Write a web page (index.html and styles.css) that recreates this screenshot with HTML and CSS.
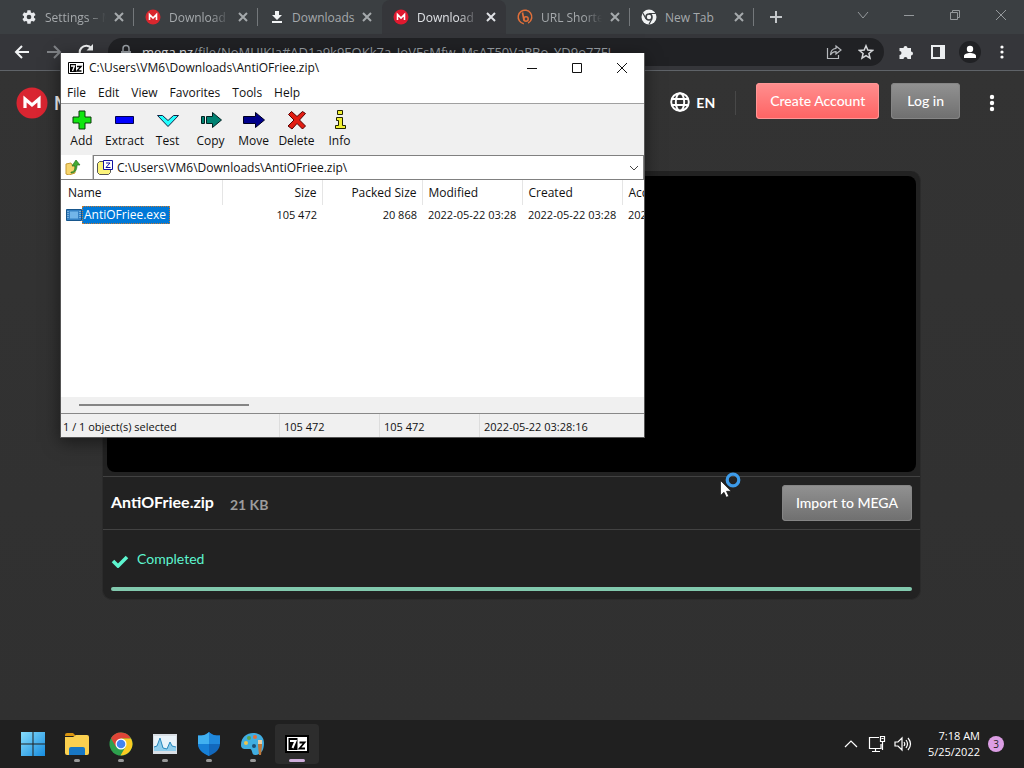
FILE: index.html
```html
<!DOCTYPE html>
<html lang="en">
<head>
<meta charset="utf-8">
<title>Download</title>
<link rel="stylesheet" href="styles.css">
</head>
<body>
<div class="desktop">
  <header class="browser">
    <div class="tabstrip">
      <div class="tab">
        <svg class="icon16" viewBox="0 0 24 24" fill="#e8eaed"><path d="M19.4 13c0-.3.1-.6.1-1s0-.7-.1-1l2.1-1.600c.2-.2.3-.4.1-.700l-2-3.400c-.1-.2-.4-.3-.6-.2l-2.500 1c-.5-.4-1.100-.7-1.700-1L14.400 2.400A.5.500 0 0 0 14 2h-4a.5.500 0 0 0-.5.400L9.200 5.100c-.6.3-1.200.6-1.700 1L5 5.100c-.2-.1-.5 0-.6.200l-2 3.400c-.1.3-.1.500.1.700L4.600 11c0 .3-.1.600-.1 1s0 .7.1 1l-2.100 1.600c-.2.2-.3.4-.1.700l2 3.400c.1.2.4.3.6.2l2.500-1c.5.4 1.100.7 1.700 1l.3 2.700c0 .2.2.4.5.4h4c.2 0 .4-.2.5-.4l.3-2.700c.6-.3 1.200-.6 1.700-1l2.500 1c.2.1.5 0 .6-.2l2-3.400c.1-.3.1-.5-.1-.7zM12 15.500a3.500 3.500 0 1 1 0-7 3.500 3.500 0 0 1 0 7z"/></svg>
        <span class="tab-title">Settings – Ma</span>
        <button class="close" aria-label="Close Settings"><svg viewBox="0 0 10 10"><path d="M1 1l8 8M9 1l-8 8"/></svg></button>
      </div>
      <div class="tab">
        <svg class="icon16" viewBox="0 0 16 16"><circle cx="8" cy="8" r="7.500" fill="#d9272e"/><path d="M4.500 11V5.500L8 9l3.500-3.500V11" fill="none" stroke="#fff" stroke-width="1.600"/></svg>
        <span class="tab-title">Download</span>
        <button class="close" aria-label="Close Download"><svg viewBox="0 0 10 10"><path d="M1 1l8 8M9 1l-8 8"/></svg></button>
      </div>
      <div class="tab no-line">
        <svg class="icon16" viewBox="0 0 16 16" fill="#f1f3f4"><path d="M6 2h4v4h3l-5 5-5-5h3zM3 12h10v2H3z"/></svg>
        <span class="tab-title">Downloads</span>
        <button class="close" aria-label="Close Downloads"><svg viewBox="0 0 10 10"><path d="M1 1l8 8M9 1l-8 8"/></svg></button>
      </div>
      <div class="tab no-line active">
        <svg class="icon16" viewBox="0 0 16 16"><circle cx="8" cy="8" r="7.500" fill="#e0192f"/><path d="M4.500 11V5.500L8 9l3.500-3.500V11" fill="none" stroke="#fff" stroke-width="1.600"/></svg>
        <span class="tab-title">Download</span>
        <button class="close" aria-label="Close current tab"><svg viewBox="0 0 10 10"><path d="M1 1l8 8M9 1l-8 8"/></svg></button>
      </div>
      <div class="tab">
        <svg class="icon16" viewBox="0 0 16 16" fill="none" stroke="#e2703a"><circle cx="8" cy="8" r="6.800" stroke-width="1.500" stroke-dasharray="38 5" transform="rotate(100 8 8)"/><path d="M5.500 3.500l1.500 8" stroke-width="1.600"/><circle cx="9" cy="10" r="2.200" stroke-width="1.500"/></svg>
        <span class="tab-title">URL Shortener</span>
        <button class="close" aria-label="Close URL Shortener"><svg viewBox="0 0 10 10"><path d="M1 1l8 8M9 1l-8 8"/></svg></button>
      </div>
      <div class="tab">
        <svg class="icon16" viewBox="0 0 16 16"><circle cx="8" cy="8" r="7.500" fill="#f1f3f4"/><circle cx="8" cy="8" r="3" fill="#f1f3f4" stroke="#3b3f42" stroke-width="1.600"/><path d="M8 4.500h6.800M5 9.700L1.800 4M11 9.700L8 15.300" stroke="#3b3f42" stroke-width="1.200"/></svg>
        <span class="tab-title">New Tab</span>
        <button class="close" aria-label="Close New Tab"><svg viewBox="0 0 10 10"><path d="M1 1l8 8M9 1l-8 8"/></svg></button>
      </div>
      <button class="new-tab" aria-label="New tab"><svg width="12" height="12" viewBox="0 0 12 12"><path d="M6 0v12M0 6h12" stroke="#c4c7ca" stroke-width="2"/></svg></button>
      <div class="caption">
        <button aria-label="Search tabs"><svg width="12" height="8" viewBox="0 0 12 8"><path d="M1 1l5 6 5-6"/></svg></button>
        <button aria-label="Minimize"><svg width="12" height="12" viewBox="0 0 12 12"><path d="M1 6.500h10"/></svg></button>
        <button aria-label="Restore"><svg width="12" height="12" viewBox="0 0 12 12"><path d="M1.500 3.500h7v7h-7zM3.500 3.500v-2h7v7h-2"/></svg></button>
        <button aria-label="Close"><svg width="12" height="12" viewBox="0 0 12 12"><path d="M1 1l10 10M11 1L1 11"/></svg></button>
      </div>
    </div>
    <div class="navbar">
      <button class="nav" aria-label="Back"><svg width="16" height="16" viewBox="0 0 16 16"><path d="M15 8H2M8 2L2 8l6 6" stroke="#f1f3f4" stroke-width="2" fill="none"/></svg></button>
      <button class="nav" aria-label="Forward"><svg width="16" height="16" viewBox="0 0 16 16"><path d="M1 8h13M8 2l6 6-6 6" stroke="#808387" stroke-width="2" fill="none"/></svg></button>
      <button class="nav" aria-label="Reload"><svg width="16" height="16" viewBox="0 0 16 16"><path d="M13.500 4.500A6.500 6.500 0 1 0 14.500 10" stroke="#f1f3f4" stroke-width="2" fill="none"/><path d="M15 0v6.500H8.500z" fill="#f1f3f4"/></svg></button>
      <div class="omnibox">
        <svg width="12" height="16" viewBox="0 0 12 16"><path d="M3 7V4.500a3 3 0 0 1 6 0V7" fill="none" stroke="#9aa0a6" stroke-width="1.500"/><path d="M1 7h10v8H1z" fill="#9aa0a6"/></svg>
        <label for="url">mega.nz</label>
        <input id="url" type="text" value="/file/NoMUIKJa#AD1a9k9EOKk7a_JoVEsMfw_MsAT50VaPBo_YD9o77FI">
        <button aria-label="Share"><svg width="16" height="16" viewBox="0 0 16 16" fill="none" stroke="#b6b9bd" stroke-width="1.200"><path d="M1.500 4v10.500h11V11"/><path d="M10 2l5 4-5 4V7.700C7 7.700 5.500 9 4.500 11 4.500 7.500 6.500 4.500 10 4.300z"/></svg></button>
        <button aria-label="Bookmark"><svg width="16" height="16" viewBox="0 0 16 16"><path d="M8 1.800l1.800 4.300 4.700.4-3.600 3 1.100 4.600L8 11.700l-4 2.400 1.100-4.600-3.600-3 4.700-.4z" fill="none" stroke="#d5d7da" stroke-width="1.500"/></svg></button>
      </div>
      <button class="nav tool" aria-label="Extensions"><svg width="16" height="16" viewBox="0 0 16 16" fill="#eceef0"><path d="M1.500 4h4a2 2 0 1 1 4 0H13v3.500a2 2 0 1 1 0 4V15H9.500a2 2 0 0 0-4 0h-4v-4a2 2 0 0 0 0-4z"/></svg></button>
      <button class="nav tool" aria-label="Side panel"><svg width="14" height="14" viewBox="0 0 14 14"><path d="M1 1h12v12H1z" fill="none" stroke="#eceef0" stroke-width="2"/><path d="M9 1h4v12H9z" fill="#eceef0"/></svg></button>
      <button class="nav tool" aria-label="Profile"><svg width="22" height="22" viewBox="0 0 22 22"><circle cx="11" cy="11" r="11" fill="#202124"/><circle cx="11" cy="8" r="3.200" fill="#fff"/><path d="M5 17v-2c0-4 12-4 12 0v2z" fill="#fff"/></svg></button>
      <button class="nav tool" aria-label="Menu"><svg width="4" height="14" viewBox="0 0 4 14" fill="#fff"><circle cx="2" cy="2" r="1.600"/><circle cx="2" cy="7" r="1.600"/><circle cx="2" cy="12" r="1.600"/></svg></button>
    </div>
  </header>

  <main class="mega">
    <div class="mega-top">
      <a class="brand" href="#"><svg width="32" height="32" viewBox="0 0 32 32"><circle cx="16" cy="16" r="15.500" fill="#d92531"/><path d="M9 21v-9l7 6 7-6v9" fill="none" stroke="#fff" stroke-width="3.200"/></svg>MEGA</a>
      <button class="lang"><svg width="20" height="20" viewBox="0 0 20 20" fill="none" stroke="#fff" stroke-width="1.900"><circle cx="10" cy="10" r="8.800"/><ellipse cx="10" cy="10" rx="4.200" ry="8.800"/><path d="M2 7h16M2 13h16"/></svg>EN</button>
      <span class="divider"></span>
      <button class="btn red">Create Account</button>
      <button class="btn grey">Log in</button>
      <button class="more" aria-label="More"><svg width="6" height="18" viewBox="0 0 6 18" fill="#fff"><circle cx="3" cy="3" r="2.200"/><circle cx="3" cy="9" r="2.200"/><circle cx="3" cy="15" r="2.200"/></svg></button>
    </div>
    <section class="card">
      <div class="viewer"></div>
      <div class="file-row">
        <h1>AntiOFriee.zip</h1>
        <span class="size">21 KB</span>
        <button class="btn grey">Import to MEGA</button>
      </div>
      <div class="done"><svg width="18" height="14" viewBox="0 0 18 14"><path d="M2 7l5 5 9-9" fill="none" stroke="#5df5cf" stroke-width="3.600"/></svg><span>Completed</span></div>
      <div class="bar"></div>
    </section>
  </main>

  <footer class="taskbar">
    <nav class="apps">
      <button aria-label="Start"><svg width="24" height="24" viewBox="0 0 24 24"><defs><linearGradient id="win" x2="1" y2="1"><stop stop-color="#86dcfb"/><stop offset="1" stop-color="#168ce0"/></linearGradient></defs><path d="M0 0h11.500v11.500H0zM12.500 0H24v11.500H12.500zM0 12.500h11.500V24H0zM12.500 12.500H24V24H12.500z" fill="url(#win)"/></svg></button>
      <button class="run" aria-label="File Explorer"><svg width="26" height="24" viewBox="0 0 26 24"><path d="M1 3a2 2 0 0 1 2-2h6l3 3H1z" fill="#d9940f"/><path d="M1 5h8l3-2h11a2 2 0 0 1 2 2v16a2 2 0 0 1-2 2H3a2 2 0 0 1-2-2z" fill="#fbd04f"/><path d="M5 23v-6a2 2 0 0 1 2-2h12a2 2 0 0 1 2 2v6z" fill="#1877c4"/></svg></button>
      <button class="run" aria-label="Chrome"><svg width="24" height="24" viewBox="0 0 24 24"><circle cx="12" cy="12" r="11.500" fill="#2da04d"/><path d="M12 12L2 6.200A11.500 11.500 0 0 1 22 6.500H12z" fill="#df4437"/><path d="M12 6.500h10A11.500 11.500 0 0 1 11.500 23.500L17 14z" fill="#fbcb22"/><path d="M2 6.200l5 8.700L12 12z" fill="#df4437"/><circle cx="12" cy="12" r="5.500" fill="#fff"/><circle cx="12" cy="12" r="4.300" fill="#4484ef"/></svg></button>
      <button class="run" aria-label="Task Manager"><svg width="24" height="20" viewBox="0 0 24 20"><path d="M0 0h24v20H0z" fill="#d9dfe5"/><path d="M1 2h22v15H1z" fill="#e9f3fa"/><path d="M1 17v-4l3-1 3-8 3 10 4 1 3-7 2 4 4 1v4z" fill="#90cdec"/><path d="M1 13l3-1 3-8 3 10 4 1 3-7 2 4 4 1" fill="none" stroke="#2688bd"/></svg></button>
      <button class="run" aria-label="Windows Security"><svg width="24" height="26" viewBox="0 0 24 26"><path d="M12 1c3 3 6 3.500 11 3.500V12c0 6-4 10-11 13C5 22 1 18 1 12V4.500C6 4.500 9 4 12 1z" fill="#1268bd"/><path d="M12 1v12H1V4.500C6 4.500 9 4 12 1z" fill="#41b0f0"/><path d="M12 1c3 3 6 3.500 11 3.500V12l-.1 1H12z" fill="#2088dc"/><path d="M1 13h11v12C5 22 1 18 1 13z" fill="#1780d7"/></svg></button>
      <button class="run" aria-label="Paint"><svg width="26" height="26" viewBox="0 0 26 26"><path d="M13 2c7 0 11 4 11 10s-2 11-8 12c-5 1-3-6-6-6-4 0-9 1-9-4C1 6 7 2 13 2z" fill="#40aee2"/><circle cx="6" cy="12" r="2" fill="#edc64f"/><circle cx="9" cy="7" r="2" fill="#5ba44d"/><circle cx="15" cy="6" r="2" fill="#df6f3c"/><circle cx="14" cy="15" r="2" fill="#1d4d72"/><path d="M18 9h4v6l-1 9h-2l-1-9z" fill="#bf783b"/><path d="M18 9h4v4h-4z" fill="#e7cfa5"/></svg></button>
      <button class="run current" aria-label="7-Zip"><svg width="24" height="18" viewBox="0 0 24 18"><path d="M1 1h22v16H1z" fill="#fff" stroke="#000" stroke-width="2"/><path d="M3.500 3h9v12h-9z" fill="#000"/><path d="M5 6h5.500L7.500 13" fill="none" stroke="#fff" stroke-width="2"/><path d="M14.500 7.500h5l-5 6h5.500" fill="none" stroke="#000" stroke-width="1.800"/></svg></button>
    </nav>
    <div class="tray">
      <button aria-label="Hidden icons"><svg width="14" height="8" viewBox="0 0 14 8"><path d="M1 7l6-6 6 6"/></svg></button>
      <button aria-label="Network"><svg width="18" height="18" viewBox="0 0 18 18"><path d="M11 2.500H1.500v11H13V9M4 16.500h8M7.500 13.500v3M12.500 1.500h4v5h-4zM14.500 6.500V15M13.500 3.500h2"/></svg></button>
      <button aria-label="Volume"><svg width="18" height="16" viewBox="0 0 18 16"><path d="M1 6h3l4-4v12l-4-4H1zM10 6q1.500 2 0 4M12 4q3 4 0 8M14 2q5 6 0 12"/></svg></button>
      <button class="clock">7:18 AM<br>5/25/2022</button>
      <span class="count">3</span>
    </div>
  </footer>

  <section class="zip" aria-label="7-Zip">
    <div class="zip-title">
      <svg width="16" height="12" viewBox="0 0 16 12"><path d="M.5.5h15v11H.5z" fill="#fff" stroke="#000"/><path d="M2 2h6v8H2z" fill="#000"/><path d="M3 4h3.500L4.500 9" fill="none" stroke="#fff" stroke-width="1.300"/><path d="M9 4.500h4l-4 4.500h4.500" fill="none" stroke="#000" stroke-width="1.400"/></svg>
      <span class="path">C:\Users\VM6\Downloads\AntiOFriee.zip\</span>
      <button aria-label="Minimize"><svg width="12" height="12" viewBox="0 0 12 12"><path d="M1 6.500h10"/></svg></button>
      <button aria-label="Maximize"><svg width="12" height="12" viewBox="0 0 12 12"><path d="M1.500 1.500h9v9h-9z"/></svg></button>
      <button aria-label="Close"><svg width="12" height="12" viewBox="0 0 12 12"><path d="M1 1l10 10M11 1L1 11"/></svg></button>
    </div>
    <div class="zip-menu">
      <button>File</button><button>Edit</button><button>View</button><button>Favorites</button><button>Tools</button><button>Help</button>
    </div>
    <div class="zip-tools">
      <button><svg width="22" height="22" viewBox="0 0 22 22"><path d="M8 2h6v6h6v6h-6v6H8v-6H2V8h6z" fill="#12e612" stroke="#0a3a0a"/></svg>Add</button>
      <button><svg width="22" height="22" viewBox="0 0 22 22"><path d="M1.500 7.500h18v7h-18z" fill="#00f" stroke="#000050"/></svg>Extract</button>
      <button><svg width="22" height="22" viewBox="0 0 22 22"><path d="M.5 6.500h5l5.500 5 5.500-5h5L11 17.500z" fill="#2ff" stroke="#124"/></svg>Test</button>
      <button><svg width="22" height="22" viewBox="0 0 22 22"><path d="M1.500 7.500h3v7h-3zM6.500 7.500h6v-4l9 7.500-9 7.500v-4h-6z" fill="#008272" stroke="#022"/></svg>Copy</button>
      <button><svg width="22" height="22" viewBox="0 0 22 22"><path d="M.5 7.500h12v-4l9 7.500-9 7.500v-4H.5z" fill="#00008b" stroke="#000020"/></svg>Move</button>
      <button><svg width="22" height="22" viewBox="0 0 22 22"><path d="M2.500 5.500l3-3 5.500 5 5.500-5 3 2-6 6.500 6 6-3 3-5.500-5.500-5 5.500-4-3 6-6z" fill="#e21d12" stroke="#500"/></svg>Delete</button>
      <button><svg width="22" height="22" viewBox="0 0 22 22"><path d="M8.500 1.500h5v4h-5zM7.500 8.500h6v8h3v3h-10v-3h3v-5h-2z" fill="#f0f032" stroke="#222200"/></svg>Info</button>
    </div>
    <div class="zip-address">
      <button aria-label="Up one level"><svg width="16" height="16" viewBox="0 0 16 16"><path d="M1 5l5-1 1 2h3v8l-6 2-3-1z" fill="#f7d56c" stroke="#c69b35"/><path d="M6 13c3 0 4-2 4-6H7l4-6 4 5h-3c0 5-2 8-6 8z" fill="#43ac35" stroke="#28721e" stroke-width=".7"/></svg></button>
      <div class="combo">
        <svg width="16" height="15" viewBox="0 0 16 15"><path d="M.5 3.500l2-2h4l1 2h6v9l-2 2h-9l-2-2z" fill="#fbf37a" stroke="#555"/><path d="M6.500.5h9v9h-9z" fill="#fff" stroke="#1111a0"/><path d="M9 3h4L9 7.500h4.500" fill="none" stroke="#1111a0"/></svg>
        <select aria-label="Folder"><option>C:\Users\VM6\Downloads\AntiOFriee.zip\</option></select>
        <svg width="10" height="6" viewBox="0 0 10 6"><path d="M1 1l4 4 4-4" fill="none" stroke="#444"/></svg>
      </div>
    </div>
    <div class="zip-list">
      <table>
        <thead><tr><th>Name</th><th class="num">Size</th><th class="num">Packed Size</th><th>Modified</th><th>Created</th><th>Accessed</th></tr></thead>
        <tbody><tr><td class="name"><svg width="16" height="12" viewBox="0 0 16 12"><path d="M.5.500h15v11H.5z" fill="#3581c4" stroke="#17568c"/><path d="M4 2.500h8v7H4z" fill="#72b5e9"/><path d="M2 2v8M14 2v8" stroke="#b7dcf6" stroke-dasharray="1 1"/></svg><span>AntiOFriee.exe</span></td><td class="num">105 472</td><td class="num">20 868</td><td>2022-05-22 03:28</td><td>2022-05-22 03:28</td><td>2022-05-22 03:28</td></tr></tbody>
      </table>
    </div>
    <div class="zip-scroll"><span></span></div>
    <div class="zip-status"><span>1 / 1 object(s) selected</span><span>105 472</span><span>105 472</span><span>2022-05-22 03:28:16</span></div>
  </section>

  <svg class="cursor" width="22" height="26" viewBox="0 0 22 26"><circle cx="14" cy="8" r="5.800" fill="none" stroke="#3d9be9" stroke-width="3.200"/><path d="M1.500 8.500v15l3.500-3.200 2.300 5 2.500-1-2.300-5h4.700z" fill="#fff" stroke="#111" stroke-width=".7"/></svg>
</div>
</body>
</html>
```
FILE: styles.css
```css
* { box-sizing: border-box; }
body { margin: 0; font-family: "Open Sans", "Noto Sans", sans-serif; font-size: 12px; }
button, input, select { font: inherit; color: inherit; background: none; border: 0; padding: 0; margin: 0; }
svg { display: block; flex: none; }
.desktop { position: relative; min-height: 100vh; display: flex; flex-direction: column; overflow: hidden; background: #303030; }

/* Browser chrome */
.browser { background: #35363a; border-bottom: 1px solid #5f6368; }
.tabstrip { display: flex; height: 34px; padding-left: 10px; background: #3b3f42; color: #a5a9ac; }
.tab { display: flex; align-items: center; flex: 0 1 124px; min-width: 0; padding: 0 10px 0 11px; gap: 8px; position: relative; }
.tab::after { content: ""; position: absolute; right: 0; top: 8px; height: 18px; width: 1px; background: #74787b; }
.tab.no-line::after { display: none; }
.tab.active { background: #35363a; color: #dfe1e5; border-radius: 8px 8px 0 0; }
.icon16 { width: 16px; height: 16px; }
.tab-title { flex: 1; min-width: 0; overflow: hidden; white-space: nowrap; mask-image: linear-gradient(90deg, #000 70%, transparent); }
.tab:nth-child(3) .tab-title, .tab:nth-child(6) .tab-title { mask-image: none; }
.tab:nth-child(3) { gap: 7px; }
.close { display: flex; }
.close svg { width: 10px; height: 10px; fill: none; stroke: currentColor; stroke-width: 2; }
.new-tab { display: flex; align-items: center; justify-content: center; width: 44px; }
.caption { display: flex; margin-left: auto; height: 29px; }
.caption button { display: flex; align-items: center; justify-content: center; width: 46px; }
.caption svg { fill: none; stroke: #95999c; }
.navbar { display: flex; align-items: center; height: 36px; padding: 0 6px; }
.nav { display: flex; align-items: center; justify-content: center; width: 32px; height: 28px; }
.omnibox { display: flex; align-items: center; flex: 1; height: 28px; margin: 0 6px; padding: 0 2px 0 12px; border-radius: 14px; background: #202124; font-size: 13px; color: #9aa0a6; }
.omnibox label { margin-left: 10px; color: #e8eaed; }
.omnibox input { flex: 1; min-width: 0; outline: 0; }
.omnibox button { display: flex; justify-content: center; width: 32px; }

/* Download page */
.mega { flex: 1; font-family: Lato, "Open Sans", sans-serif; color: #fff; background: linear-gradient(#333, #303030); }
.mega-top { display: flex; align-items: center; height: 64px; padding: 0 24px 0 16px; }
.brand { display: flex; align-items: center; gap: 6px; margin-right: auto; color: #fff; font-size: 18px; font-weight: 700; text-decoration: none; }
.lang { display: flex; align-items: center; gap: 6px; padding-bottom: 2px; font-size: 14px; font-weight: 700; }
.divider { width: 1px; height: 24px; margin: 0 20px; background: #484848; }
.btn { height: 36px; padding: 0 14px 2px; border-radius: 4px; font-size: 14px; font-weight: 500; white-space: nowrap; }
.mega-top .btn { margin-bottom: 4px; }
.red { margin-right: 12px; background: linear-gradient(#ff8f8f, #ff6363); box-shadow: inset 0 0 0 1px #ff9696; }
.grey { padding-left: 16px; padding-right: 16px; background: linear-gradient(#929292, #6f6f6f); box-shadow: inset 0 0 0 1px #858585; }
.more { display: flex; justify-content: center; margin-left: 24px; width: 16px; }
.card { margin: 36px 104px 0 102px; margin-right: 103px; padding: 5px 4px 8px; border: 1px solid #2b2b2b; border-top: 0; border-radius: 10px; background: #222; }
.viewer { height: 296px; border-radius: 8px; background: #000; }
.file-row { display: flex; align-items: center; height: 54px; margin: 4px -4px 0; padding: 0 8px; border: solid #424242; border-width: 1px 0; }
.file-row h1 { margin: 0; padding-bottom: 4px; font-size: 16px; font-weight: 700; }
.size { margin-left: 16px; padding-top: 2px; font-size: 14px; font-weight: 700; color: #9c9c9c; }
.file-row .grey { margin-left: auto; padding-left: 14px; padding-right: 14px; }
.done { display: flex; align-items: center; gap: 8px; height: 57px; padding-left: 4px; color: #5df5cf; font-size: 14px; }
.done svg { margin-top: 4px; }
.bar { height: 4px; margin: 0 4px; border-radius: 2px; background: #82c9ae; }

/* Taskbar */
.taskbar { display: flex; justify-content: space-between; height: 48px; padding: 0 20px 0 11px; background: #202020; color: #fff; }
.apps { display: flex; align-items: center; }
.apps button { position: relative; display: flex; align-items: center; justify-content: center; width: 44px; height: 40px; }
.run::after { content: ""; position: absolute; bottom: 2px; width: 6px; height: 3px; border-radius: 2px; background: #999; }
.apps .current { background: #2d2d2d; border-radius: 4px; }
.current::after { width: 16px; background: #cfaedb; }
.tray { display: flex; align-items: center; }
.tray svg { fill: none; stroke: #fff; stroke-width: 1.200; }
.tray button:not(.clock) { display: flex; justify-content: center; width: 26px; }
.tray .clock { margin: 0 8px 0 12px; text-align: right; font-size: 11px; line-height: 16px; }
.count { width: 16px; border-radius: 8px; background: #dc9ee4; color: #222; font-size: 10px; line-height: 16px; text-align: center; }

/* Archive manager window */
.zip { position: absolute; left: 60px; top: 53px; width: 585px; height: 385px; display: flex; flex-direction: column; border: 1px solid #555; border-top: 0; background: #fff; color: #111; box-shadow: 0 4px 16px rgba(0, 0, 0, .5); }
.zip-title { display: flex; align-items: center; height: 29px; padding-left: 7px; }
.path { flex: 1; margin-left: 5px; }
.zip-title button { display: flex; align-items: center; justify-content: center; width: 45px; height: 29px; }
.zip-title button svg { fill: none; stroke: #111; }
.zip-menu { display: flex; align-items: center; gap: 12px; height: 22px; padding-left: 6px; border-bottom: 1px solid #a0a0a0; }
.zip-tools { display: flex; height: 51px; background: #f0f0f0; }
.zip-tools button { display: flex; flex-direction: column; align-items: center; width: 43px; padding: 5px 2px 0 0; line-height: 20px; }
.zip-address { display: flex; height: 25px; border-bottom: 1px solid #808080; }
.zip-address > button { display: flex; align-items: center; width: 32px; padding-left: 4px; border-right: 1px solid #ccc; }
.combo { display: flex; align-items: center; flex: 1; padding: 0 4px 0 3px; border: 1px solid #808080; border-bottom: 0; }
.combo select { flex: 1; min-width: 0; margin-left: 4px; appearance: none; outline: 0; }
.zip-list { flex: 1; overflow: hidden; }
.zip-list table { width: 661px; table-layout: fixed; border-collapse: collapse; }
.zip-list th, .zip-list td { width: 100px; padding: 0 5px 0 6px; text-align: left; font-weight: 400; white-space: nowrap; }
.zip-list th:first-child { width: 161px; padding-left: 7px; }
.zip-list th { height: 25px; border-right: 1px solid #e5e5e5; }
.zip-list td { height: 19px; font-size: 11px; }
.zip-list .num { text-align: right; }
.zip-list .name { display: flex; align-items: center; padding-left: 5px; font-size: 12px; }
.name span { padding: 0 4px 0 2px; line-height: 18px; background: #0078d7; color: #fff; outline: 1px dotted #c87a30; outline-offset: -1px; }
.zip-scroll { display: flex; align-items: center; height: 17px; padding-left: 18px; background: #f0f0f0; border-bottom: 1px solid #888; }
.zip-scroll span { width: 170px; height: 2px; background: #858585; }
.zip-status { display: flex; height: 23px; background: #f0f0f0; font-size: 11px; line-height: 25px; }
.zip-status span { width: 100px; padding-left: 4px; border-right: 1px solid #ddd; }
.zip-status span:first-child { width: 219px; padding-left: 2px; }
.zip-status span:last-child { flex: 1; border: 0; }

.cursor { position: absolute; left: 719px; top: 472px; }
```
